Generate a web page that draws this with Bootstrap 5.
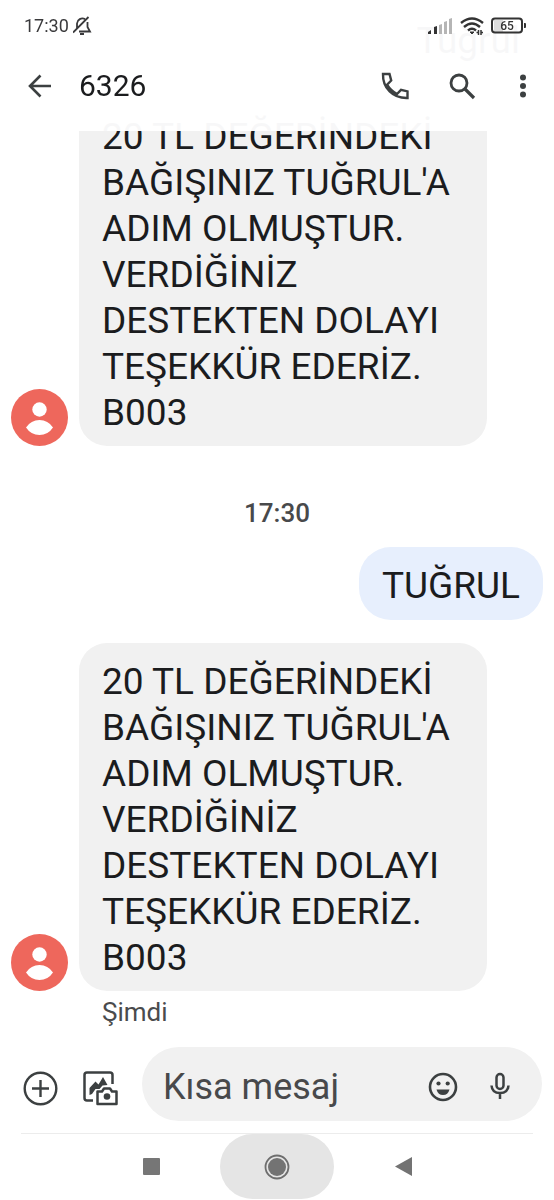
<!DOCTYPE html>
<html lang="tr">
<head>
<meta charset="utf-8">
<meta name="viewport" content="width=device-width, initial-scale=1">
<title>6326</title>
<link href="https://cdn.jsdelivr.net/npm/bootstrap@5.3.0/dist/css/bootstrap.min.css" rel="stylesheet">
<style>
  body { font-family: Roboto, sans-serif; color: #1b1c1e; background: #fff; }
  svg { display: block; flex: none; }
  .app-head { background: rgba(255,255,255,.97); height: 131px; }
  .status { font-size: 18px; line-height: 24px; padding: 14px 27px 0 24px; color: #3a3a3c; }
  .status-icons { gap: 7px; }
  .toolbar-row { height: 48px; padding: 0 19px 0 25px; margin-top: 24px; }
  .contact { font-size: 30px; line-height: 40px; font-weight: 400; margin-left: 26px; }
  .actions { gap: 35px; }
  .icon-btn { border: 0; background: none; padding: 0; color: #3c4041; }
  .thread { padding: 0 11px; min-height: 0; }
  .bubble { font-size: 37px; line-height: 46px; padding: 16px 23px 10px; border-radius: 28px; background: #f1f1f1; }
  .bubble-in { width: 408px; }
  .bubble-out { background: #e7effd; border-radius: 32px; padding-bottom: 11px; margin-bottom: 23px; }
  .avatar { margin-right: 11px; }
  .stamp { font-size: 26px; line-height: 32px; font-weight: 500; color: #48494b; padding: 51px 0 18px; }
  .sent-at { font-size: 26px; line-height: 32px; color: #4a4b4d; margin-left: 91px; padding-top: 5px; }
  .composer { padding: 19px 12px 12px 23px; }
  .attach { gap: 25px; padding-top: 8px; }
  .field-pill { background: #f1f1f1; border-radius: 37px; height: 74px; padding: 5px 30px 0 21px; margin-left: 24px; min-width: 0; }
  .pill-keys { gap: 30px; }
  .msg-input { font-size: 36px; line-height: 46px; border: 0; background: none; outline: 0; padding: 0; min-width: 0; width: 0; }
  .msg-input::placeholder { color: #48494b; opacity: 1; }
  .sys-nav { height: 66px; padding-bottom: 1px; }
  .rule { height: 1px; background: #ececec; margin: 0 21px; }
  .side-key { width: 40px; margin: 0 49px; }
  .home-key { width: 114px; height: 65px; border-radius: 33px; background: #e5e5e5; }
</style>
</head>
<body class="d-flex flex-column vh-100 overflow-hidden">
<header class="app-head fixed-top">
  <div class="status d-flex align-items-center">
    <span>17:30</span>
    <svg class="ms-1" width="20" height="20" viewBox="0 0 20 20" fill="none" stroke="#3a3a3c" stroke-width="1.800"><path d="M4 12V7.500a5.500 5.500 0 0 1 8-4.500M14.500 6v5l2.500 4.500H6M0 16.500 15.500 1"/><path d="M7 18h4" stroke-width="2"/></svg>
    <div class="status-icons d-flex align-items-center ms-auto">
      <svg width="25" height="17" viewBox="0 0 25 17"><g fill="#333"><path d="M0 16v-2l3-2v4zM6 16V9l3-1v8z"/></g><g fill="#b5b5b5"><path d="M11 16V7l3-1v10zM16 16V4l3-1v13zM21 16V1l3-1v16z"/></g></svg>
      <svg width="24" height="18" viewBox="0 0 24 18" fill="none" stroke="#333" stroke-width="2.400"><path d="M1 6q11-9 22 0M4 10q8-7 16 0M8 13.500q4-3.500 8 0"/><path d="m12 17-2-2h4z" fill="#333" stroke-width="1"/><path d="M18.500 13v5m-2-2.500h2M21 13v5m0-2.500h2" stroke-width="1.500"/></svg>
      <svg width="36" height="18" viewBox="0 0 36 18"><path d="M3 3h9v12H3z" fill="#ddd"/><rect x="1" y="1.500" width="30" height="14" rx="3" fill="none" stroke="#333" stroke-width="2"/><path d="M33 6h1q1 0 1 1v3q0 1-1 1h-1z" fill="#333"/><text x="16" y="13" font-size="12" font-weight="500" text-anchor="middle" fill="#333">65</text></svg>
    </div>
  </div>
  <div class="toolbar-row d-flex align-items-center">
    <button class="icon-btn" aria-label="Geri"><svg width="28" height="28" viewBox="0 0 28 28" fill="none" stroke="currentColor" stroke-width="2.600"><path d="M26 14H5M15.500 3.500 5 14l10.500 10.500"/></svg></button>
    <h1 class="contact mb-0">6326</h1>
    <div class="actions d-flex align-items-center ms-auto">
      <button class="icon-btn" aria-label="Ara"><svg width="32" height="28" viewBox="0 0 32 28" fill="none" stroke="currentColor" stroke-width="2.400"><path d="M2 2h6.500l1.700 6.500-4.100 4.100Q9.500 18.500 16 22l4-4.100 6.500 1.500V26C12 26.500 1.500 16 2 2z"/></svg></button>
      <button class="icon-btn" aria-label="Mesajlarda ara"><svg width="28" height="28" viewBox="0 0 28 28" fill="none" stroke="currentColor" stroke-width="2.800"><circle cx="11" cy="11" r="8"/><path d="m17 17 9 9" stroke-width="3.200"/></svg></button>
      <button class="icon-btn" aria-label="Diğer seçenekler"><svg width="24" height="28" viewBox="4 0 24 28" fill="currentColor"><circle cx="16" cy="5.500" r="3"/><circle cx="16" cy="14" r="3"/><circle cx="16" cy="22.500" r="3"/></svg></button>
    </div>
  </div>
</header>

<main class="thread flex-grow-1 d-flex flex-column justify-content-end">
  <div class="d-flex justify-content-end"><div class="bubble bubble-out">Tuğrul</div></div>
  <div class="d-flex align-items-end">
    <svg class="avatar" width="57" height="57" viewBox="0 0 57 57"><circle cx="28.500" cy="28.500" r="28.500" fill="#ee675c"/><circle cx="28.500" cy="20.500" r="7.200" fill="#fff"/><path d="M15 38.500Q20 31 28.500 31T42 38.500Q37 46 28.500 46T15 38.500z" fill="#fff"/></svg>
    <div class="bubble bubble-in">20 TL DEĞERİNDEKİ BAĞIŞINIZ TUĞRUL'A ADIM OLMUŞTUR. VERDİĞİNİZ DESTEKTEN DOLAYI TEŞEKKÜR EDERİZ. B003</div>
  </div>
  <div class="stamp text-center">17:30</div>
  <div class="d-flex justify-content-end"><div class="bubble bubble-out">TUĞRUL</div></div>
  <div class="d-flex align-items-end">
    <svg class="avatar" width="57" height="57" viewBox="0 0 57 57"><circle cx="28.500" cy="28.500" r="28.500" fill="#ee675c"/><circle cx="28.500" cy="20.500" r="7.200" fill="#fff"/><path d="M15 38.500Q20 31 28.500 31T42 38.500Q37 46 28.500 46T15 38.500z" fill="#fff"/></svg>
    <div class="bubble bubble-in">20 TL DEĞERİNDEKİ BAĞIŞINIZ TUĞRUL'A ADIM OLMUŞTUR. VERDİĞİNİZ DESTEKTEN DOLAYI TEŞEKKÜR EDERİZ. B003</div>
  </div>
  <div class="sent-at">Şimdi</div>
</main>

<footer>
  <form class="composer d-flex align-items-center">
    <div class="attach d-flex">
      <button type="button" class="icon-btn" aria-label="Ekle"><svg width="35" height="35" viewBox="0 0 35 35" fill="none" stroke="currentColor" stroke-width="2.400"><circle cx="17.500" cy="17.500" r="15.800"/><path d="M17.500 9v17M9 17.500h17"/></svg></button>
      <button type="button" class="icon-btn" aria-label="Galeri ve kamera"><svg width="35" height="35" viewBox="0 0 35 35"><g fill="none" stroke="currentColor" stroke-width="2.500" stroke-linejoin="round"><path d="M10 29.500H4q-2.500 0-2.500-2.500V4Q1.500 1.500 4 1.500h23q2.500 0 2.500 2.500v9"/><path d="M14.500 20.500h4.500l2-3h6l2 3h4.500v12.500h-19z"/></g><circle cx="24" cy="25.500" r="3.300" fill="currentColor"/><path d="M6.500 24v-7l6-6.500 3 3L20 6l4.500 8-5 .500-3 3.500h-4L9 23z" fill="currentColor"/></svg></button>
    </div>
    <div class="field-pill d-flex align-items-center flex-grow-1">
      <input class="msg-input flex-grow-1" type="text" placeholder="Kısa mesaj" aria-label="Kısa mesaj">
      <div class="pill-keys d-flex">
        <button type="button" class="icon-btn" aria-label="Emoji"><svg width="30" height="30" viewBox="0 0 30 30"><circle cx="15" cy="15" r="13" fill="none" stroke="currentColor" stroke-width="2.600"/><circle cx="10.500" cy="11.500" r="2.100" fill="currentColor"/><circle cx="19.700" cy="11.500" r="2.100" fill="currentColor"/><path d="M8.500 17.500h13q-1.500 5.500-6.500 5.500t-6.500-5.500z" fill="currentColor"/></svg></button>
        <button type="button" class="icon-btn" aria-label="Sesli mesaj"><svg width="24" height="30" viewBox="0 0 24 30" fill="none" stroke="currentColor" stroke-width="2.500"><rect x="8.500" y="2" width="7" height="15" rx="3.500"/><path d="M3.500 13.500Q4 21 12 21t8.500-7.500M12 21v6"/></svg></button>
      </div>
    </div>
  </form>
  <div class="rule"></div>
  <nav class="sys-nav d-flex justify-content-center align-items-center" aria-label="Sistem">
    <button class="icon-btn side-key" aria-label="Son uygulamalar"><svg class="mx-auto" width="17" height="17"><rect width="17" height="17" rx="1" fill="#767676"/></svg></button>
    <button class="icon-btn home-key" aria-label="Ana ekran"><svg class="mx-auto" width="26" height="26" viewBox="0 0 26 26"><circle cx="13" cy="13" r="11.500" fill="none" stroke="#6e6e6e" stroke-width="1.800"/><circle cx="13" cy="13" r="9" fill="#737373"/></svg></button>
    <button class="icon-btn side-key" aria-label="Geri dön"><svg class="mx-auto" width="17" height="19" viewBox="0 0 17 19"><path d="M0 9.500 17 0v19z" fill="#737373"/></svg></button>
  </nav>
</footer>
<script src="https://cdn.jsdelivr.net/npm/bootstrap@5.3.0/dist/js/bootstrap.bundle.min.js"></script>
</body>
</html>
